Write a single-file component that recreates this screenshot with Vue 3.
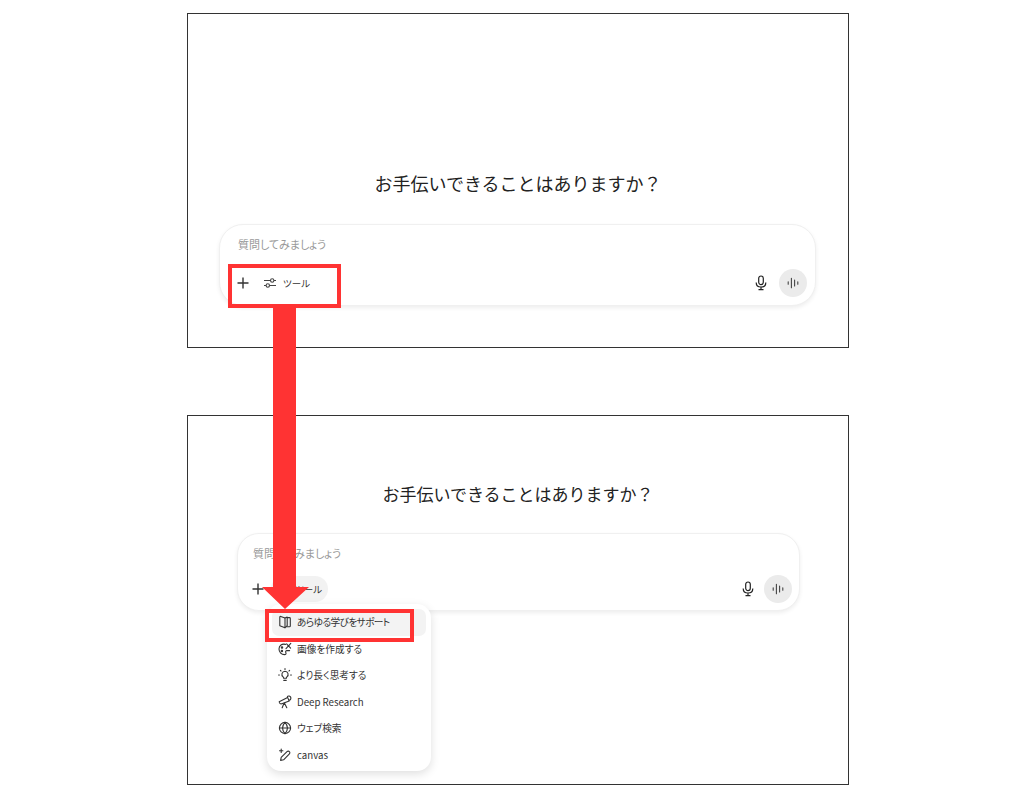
<script setup>
const menuItems = [
  { icon: 'book', label: 'あらゆる学びをサポート', active: true },
  { icon: 'palette', label: '画像を作成する' },
  { icon: 'bulb', label: 'より長く思考する' },
  { icon: 'scope', label: 'Deep Research' },
  { icon: 'globe', label: 'ウェブ検索' },
  { icon: 'pen', label: 'canvas' },
]
</script>

<template>
  <div class="page">
    <section class="frame frame-top">
      <h1 class="title">お手伝いできることはありますか？</h1>
      <div class="composer">
        <p class="placeholder">質問してみましょう</p>
        <div class="toolbar">
          <svg class="plus" width="14" height="14" viewBox="0 0 14 14"><path d="M7 1.5v11M1.5 7h11" stroke="#333" stroke-width="1.4" fill="none" /></svg>
          <div class="tools">
            <svg width="14" height="14" viewBox="0 0 14 14" fill="none" stroke="#444" stroke-width="1.1"><path d="M1 4.5h6.5M11 4.5h2M1 9.5h2M6.5 9.5H13" /><circle cx="9.2" cy="4.5" r="1.7" /><circle cx="4.8" cy="9.5" r="1.7" /></svg>
            <span>ツール</span>
          </div>
          <div class="spacer"></div>
          <svg class="mic" width="14" height="16" viewBox="0 0 14 16" fill="none" stroke="#222" stroke-width="1.2"><rect x="4.7" y="1" width="4.6" height="8.6" rx="2.3" /><path d="M2.2 7.4c0 3 2 4.6 4.8 4.6s4.8-1.6 4.8-4.6M7 12v2.5M4.5 14.6h5" /></svg>
          <div class="voice">
            <svg width="12" height="12" viewBox="0 0 12 12" stroke="#444" stroke-width="1.1" stroke-linecap="round"><path d="M1.2 4.8v2.4M4.4 1.2v9.6M7.6 3v6M10.8 4.8v2.4" /></svg>
          </div>
        </div>
      </div>
    </section>

    <section class="frame frame-bottom">
      <h1 class="title">お手伝いできることはありますか？</h1>
      <div class="composer">
        <p class="placeholder">質問してみましょう</p>
        <div class="toolbar">
          <svg class="plus" width="14" height="14" viewBox="0 0 14 14"><path d="M7 1.5v11M1.5 7h11" stroke="#333" stroke-width="1.4" fill="none" /></svg>
          <div class="tools tools-open">
            <svg width="14" height="14" viewBox="0 0 14 14" fill="none" stroke="#444" stroke-width="1.1"><path d="M1 4.5h6.5M11 4.5h2M1 9.5h2M6.5 9.5H13" /><circle cx="9.2" cy="4.5" r="1.7" /><circle cx="4.8" cy="9.5" r="1.7" /></svg>
            <span>ツール</span>
          </div>
          <div class="spacer"></div>
          <svg class="mic" width="14" height="16" viewBox="0 0 14 16" fill="none" stroke="#222" stroke-width="1.2"><rect x="4.7" y="1" width="4.6" height="8.6" rx="2.3" /><path d="M2.2 7.4c0 3 2 4.6 4.8 4.6s4.8-1.6 4.8-4.6M7 12v2.5M4.5 14.6h5" /></svg>
          <div class="voice">
            <svg width="12" height="12" viewBox="0 0 12 12" stroke="#444" stroke-width="1.1" stroke-linecap="round"><path d="M1.2 4.8v2.4M4.4 1.2v9.6M7.6 3v6M10.8 4.8v2.4" /></svg>
          </div>
        </div>
      </div>

      <ul class="menu">
        <li v-for="item in menuItems" :key="item.label" class="menu-item" :class="{ active: item.active }">
          <svg width="14" height="14" viewBox="0 0 14 14" fill="none" stroke="#333" stroke-width="1.1" stroke-linecap="round" stroke-linejoin="round">
            <template v-if="item.icon === 'book'">
              <path d="M7 3 2.8 1.4c-.5-.2-1 .1-1 .7v8.6l5.2 2V3Z" />
              <path d="M7 3l2.2-.9v8.6L7 12.7" />
              <path d="M9.2 2.6h2.2c.5 0 .9.4.9.9v7.4c0 .5-.4.9-.9.9H8.6" />
            </template>
            <template v-else-if="item.icon === 'palette'">
              <path d="M7.5 2.4C4 1.4 1 3.6 1 7c0 3.3 2.6 5.6 5.4 5.6 1.6 0 2-1.1 1.4-2.1-.6-1 0-1.9 1.2-1.9h2.6" />
              <path d="M12.8 1.4 8 6.6M8.6 1.8l4 4.4" />
              <circle cx="4" cy="5.4" r=".7" />
              <circle cx="3.9" cy="9" r=".7" />
            </template>
            <template v-else-if="item.icon === 'bulb'">
              <path d="M7 3.2a3.2 3.2 0 0 0-1.9 5.7c.4.4.5.8.5 1.3h2.8c0-.5.1-.9.5-1.3A3.2 3.2 0 0 0 7 3.2ZM5.8 12.4h2.4" />
              <path d="M7 .6v.8M2.4 2.4l.6.6M11.6 2.4l-.6.6M.6 7h.8M12.6 7h.8" />
            </template>
            <template v-else-if="item.icon === 'scope'">
              <path d="M1.2 6.8 9.6 2.4l1.6 3.6-7.4 2.8c-1.2.4-2.4-.2-2.6-2Z" />
              <path d="M9.4 2.4c-.2-1 .8-1.6 1.8-1.4 1 .3 1.8 1.8 1.6 2.8-.2.8-.8 1.2-1.6 1.4" />
              <path d="M6 8.2 4.2 12.8M6.4 8l2.4 4.8" />
            </template>
            <template v-else-if="item.icon === 'globe'">
              <circle cx="7" cy="7" r="5.6" />
              <path d="M1.4 7h11.2M7 1.4c-3 3.4-3 7.8 0 11.2M7 1.4c3 3.4 3 7.8 0 11.2" />
            </template>
            <template v-else>
              <path d="M2.6 12.4l.6-3 5.8-5.8c.7-.7 1.8-.7 2.4 0 .6.6.6 1.7 0 2.3l-5.8 5.9-3 .6Z" />
              <path d="M3.2 1v3.4M1.5 2.7h3.4" />
            </template>
          </svg>
          <span>{{ item.label }}</span>
        </li>
      </ul>
    </section>

    <svg class="arrow" width="50" height="306" viewBox="0 0 50 306"><path d="M12 0h23v282h13L24 304 1 282h11Z" fill="#ff3333" /></svg>
    <div class="mark mark-tools"></div>
    <div class="mark mark-menu"></div>
  </div>
</template>

<style scoped>
.page {
  position: relative;
  width: 1024px;
  height: 800px;
  padding: 13px 0 0 187px;
  box-sizing: border-box;
  background: #fff;
  font-family: "Noto Sans CJK JP", "Noto Sans", sans-serif;
  color: #222;
}
.frame {
  width: 662px;
  box-sizing: border-box;
  border: 1px solid #333;
  display: flex;
  flex-direction: column;
  align-items: center;
}
.frame-top {
  height: 335px;
  padding-top: 155px;
}
.frame-bottom {
  position: relative;
  height: 370px;
  margin-top: 67px;
  padding-top: 64px;
}
.title {
  margin: 0;
  font-weight: 400;
  line-height: 28px;
  white-space: nowrap;
}
.frame-top .title { font-size: 18px; }
.frame-bottom .title { font-size: 17px; }
.composer {
  box-sizing: border-box;
  background: #fff;
  border: 1px solid #f0f0f0;
  box-shadow: 0 2px 4px rgba(0, 0, 0, 0.07);
  display: flex;
  flex-direction: column;
}
.frame-top .composer {
  width: 597px;
  height: 82px;
  margin-top: 27px;
  margin-left: -1px;
  border-radius: 24px;
  padding: 11px 8px 0 18px;
}
.frame-bottom .composer {
  width: 563px;
  height: 78px;
  margin-top: 25px;
  margin-left: 1px;
  border-radius: 22px;
  padding: 11px 7px 0 15px;
}
.placeholder {
  margin: 0;
  font-size: 11px;
  line-height: 17px;
  color: #999;
  font-feature-settings: "palt";
}
.toolbar {
  display: flex;
  align-items: center;
  margin-top: 16px;
}
.frame-bottom .toolbar { margin-top: 13px; }
.plus { margin-left: -2px; }
.tools {
  display: flex;
  align-items: center;
  gap: 6px;
  margin-left: 13px;
  height: 26px;
  font-size: 9.5px;
  color: #333;
  font-feature-settings: "palt";
}
.frame-bottom .tools {
  margin-left: 6px;
  padding: 0 6px 0 8px;
  border-radius: 13px;
  background: #f2f2f2;
  gap: 2px;
}
.spacer { flex: 1; }
.mic { margin-right: 11px; }
.frame-bottom .mic { margin-right: 9px; }
.voice {
  width: 28px;
  height: 28px;
  border-radius: 50%;
  background: #ebebeb;
  display: flex;
  align-items: center;
  justify-content: center;
}
.menu {
  position: absolute;
  left: 79px;
  top: 188px;
  width: 164px;
  height: 167px;
  box-sizing: border-box;
  margin: 0;
  padding: 5px;
  list-style: none;
  background: #fff;
  border-radius: 14px;
  box-shadow: 0 3px 10px rgba(0, 0, 0, 0.13);
}
.menu-item {
  display: flex;
  align-items: center;
  gap: 5px;
  height: 26.5px;
  padding-left: 6px;
  border-radius: 7px;
  font-size: 9.7px;
  color: #333;
  white-space: nowrap;
  font-feature-settings: "palt";
}
.menu-item.active {
  background: #f3f3f3;
  letter-spacing: -0.6px;
}
.arrow {
  position: absolute;
  left: 261px;
  top: 305px;
}
.mark {
  position: absolute;
  box-sizing: border-box;
  border: 4px solid #ff3333;
}
.mark-tools {
  left: 228px;
  top: 264px;
  width: 113px;
  height: 44px;
}
.mark-menu {
  left: 265px;
  top: 609px;
  width: 149px;
  height: 33px;
}
</style>
